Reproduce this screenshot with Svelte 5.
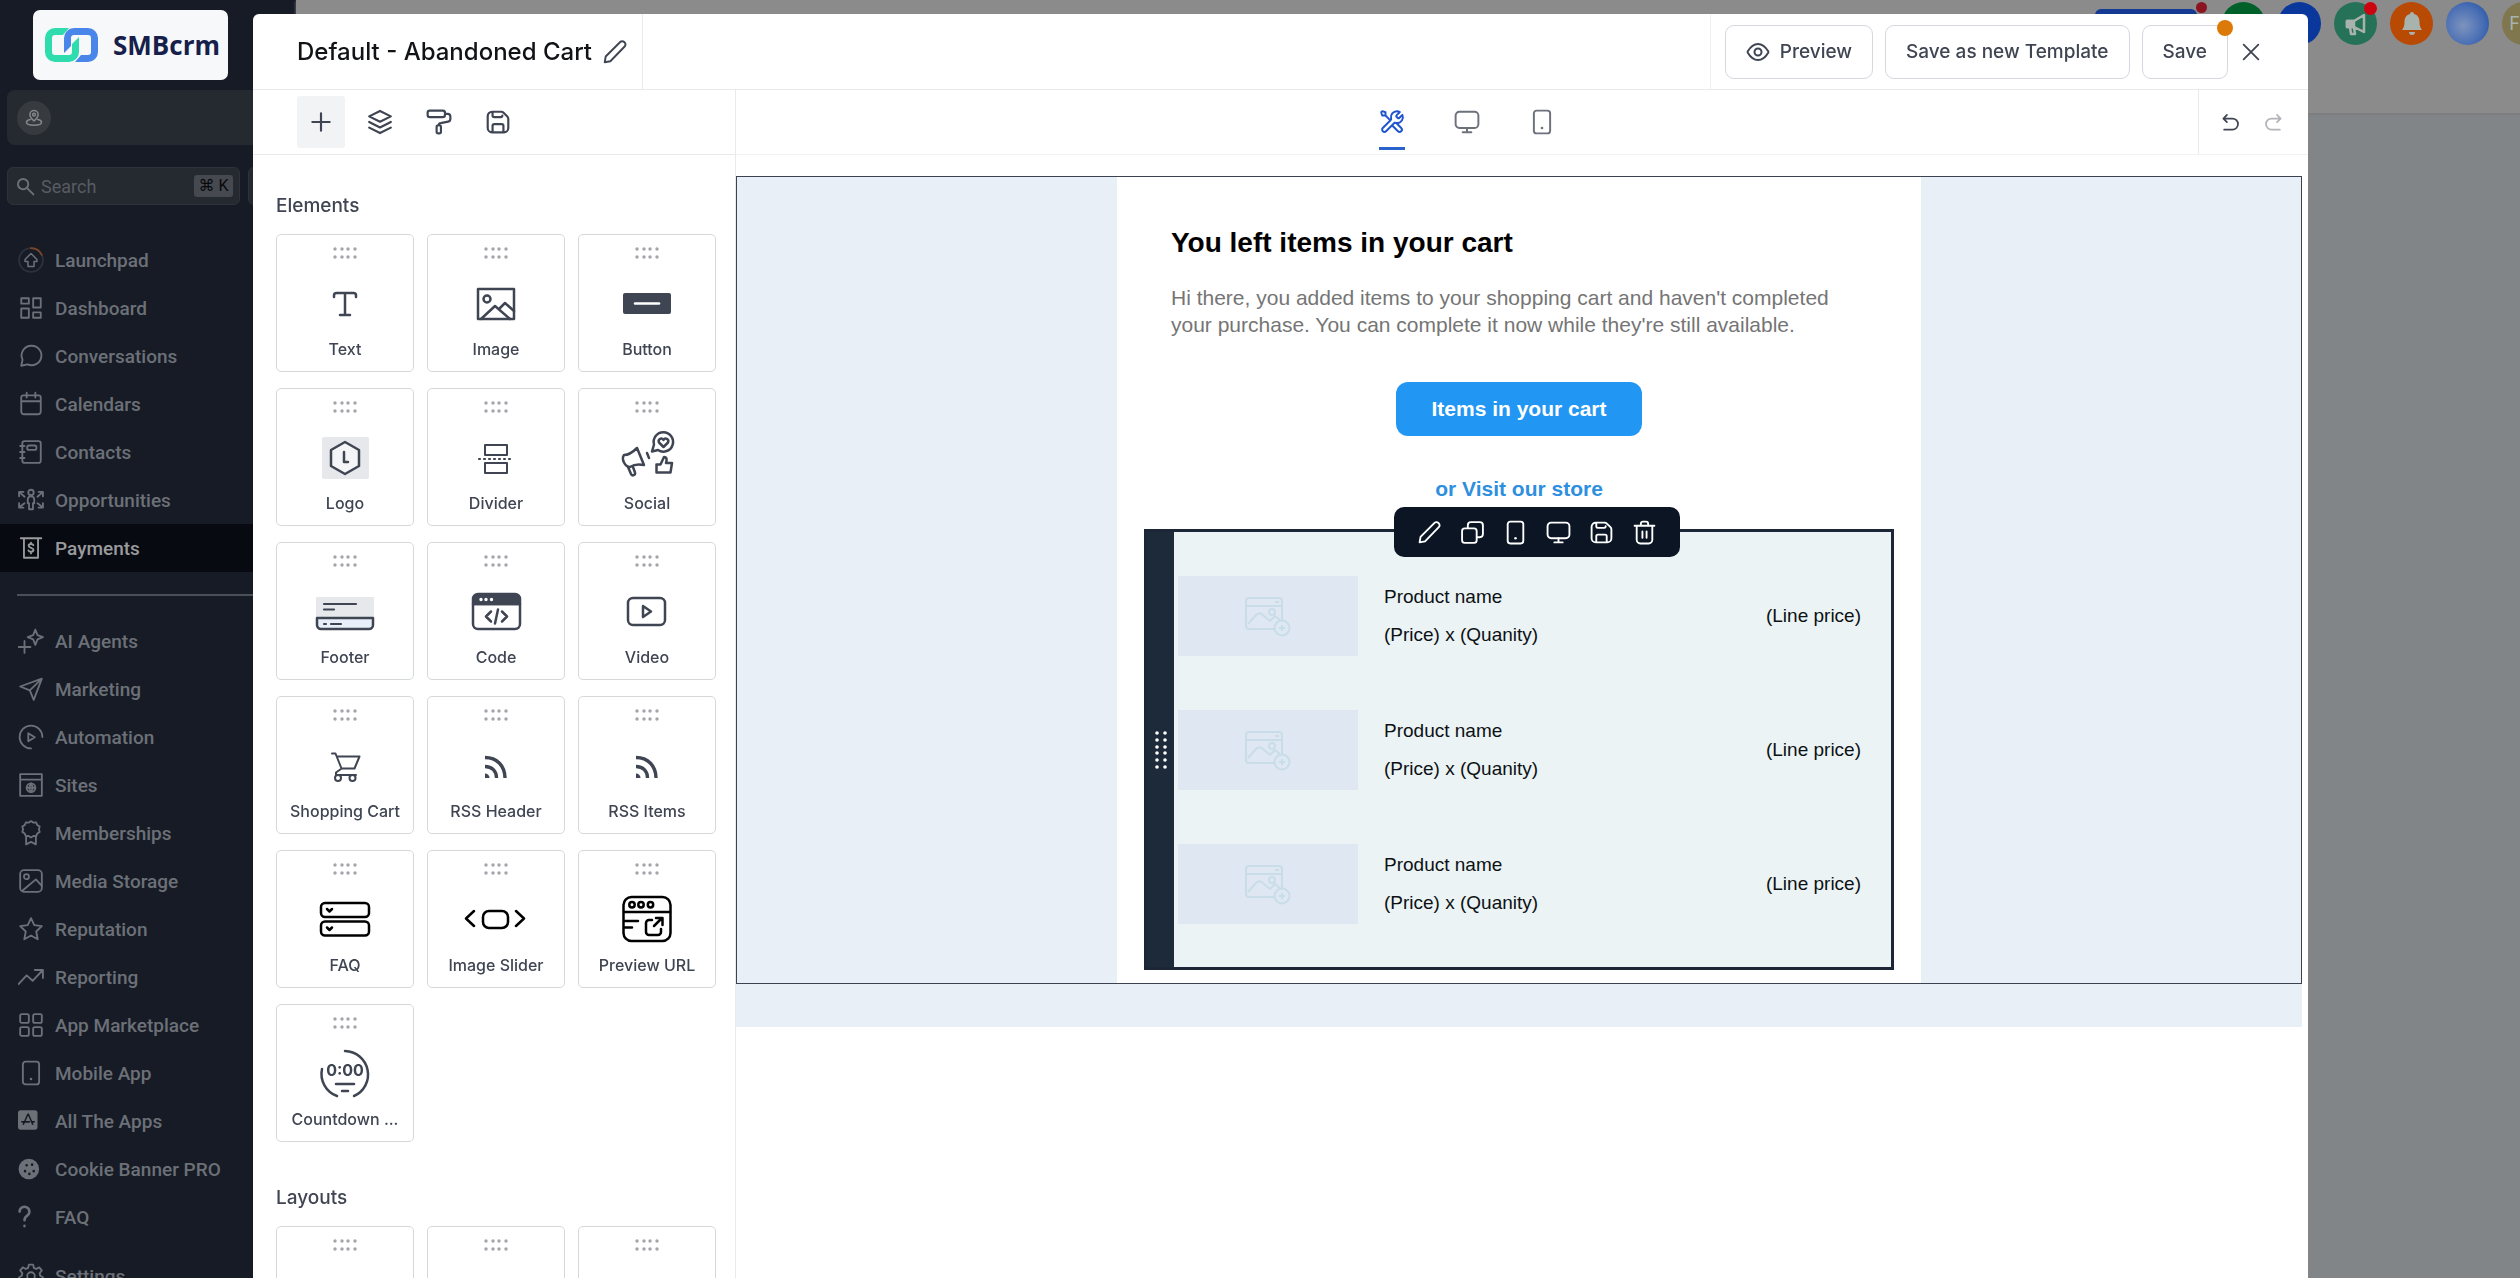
<script lang="ts">
  type NavItem = { label: string; icon: string; active?: boolean };

  const mainNav: NavItem[] = [
    { label: 'Launchpad', icon: 'launchpad' },
    { label: 'Dashboard', icon: 'dashboard' },
    { label: 'Conversations', icon: 'chat' },
    { label: 'Calendars', icon: 'calendar' },
    { label: 'Contacts', icon: 'contacts' },
    { label: 'Opportunities', icon: 'opportunities' },
    { label: 'Payments', icon: 'payments', active: true }
  ];

  const toolNav: NavItem[] = [
    { label: 'AI Agents', icon: 'sparkle' },
    { label: 'Marketing', icon: 'send' },
    { label: 'Automation', icon: 'automation' },
    { label: 'Sites', icon: 'sites' },
    { label: 'Memberships', icon: 'award' },
    { label: 'Media Storage', icon: 'media' },
    { label: 'Reputation', icon: 'star' },
    { label: 'Reporting', icon: 'trend' },
    { label: 'App Marketplace', icon: 'grid' },
    { label: 'Mobile App', icon: 'phone' },
    { label: 'All The Apps', icon: 'appstore' },
    { label: 'Cookie Banner PRO', icon: 'cookie' },
    { label: 'FAQ', icon: 'question' }
  ];

  const elements = [
    { label: 'Text', art: 'text' },
    { label: 'Image', art: 'image' },
    { label: 'Button', art: 'button' },
    { label: 'Logo', art: 'logo' },
    { label: 'Divider', art: 'divider' },
    { label: 'Social', art: 'social' },
    { label: 'Footer', art: 'footer' },
    { label: 'Code', art: 'code' },
    { label: 'Video', art: 'video' },
    { label: 'Shopping Cart', art: 'cart' },
    { label: 'RSS Header', art: 'rss' },
    { label: 'RSS Items', art: 'rss' },
    { label: 'FAQ', art: 'faq' },
    { label: 'Image Slider', art: 'slider' },
    { label: 'Preview URL', art: 'url' },
    { label: 'Countdown ...', art: 'countdown' }
  ];

  const panelTabs = [
    { label: 'Add', icon: 'plus' },
    { label: 'Layers', icon: 'layers' },
    { label: 'Styles', icon: 'roller' },
    { label: 'Saved', icon: 'save' }
  ];

  const viewTabs = [
    { label: 'Edit', icon: 'tools' },
    { label: 'Desktop', icon: 'monitor' },
    { label: 'Mobile', icon: 'phone' }
  ];

  const blockActions = [
    { label: 'Edit block', icon: 'pencil' },
    { label: 'Duplicate', icon: 'copy' },
    { label: 'Hide on mobile', icon: 'phone' },
    { label: 'Hide on desktop', icon: 'monitor' },
    { label: 'Save block', icon: 'save' },
    { label: 'Delete', icon: 'trash' }
  ];

  const products = [1, 2, 3];

  let panel = $state('Add');
  let view = $state('Edit');

  // 24x24 stroke icons
  const icons: Record<string, string> = {
    launchpad: '<circle cx="12" cy="12" r="11" stroke="#2c323c"/><path d="M12 1a11 11 0 0 1 9.9 6.2" stroke="#7d4527"/><path d="M12 6l5.5 5.5v1.8h-2.7V18H9.2v-4.7H6.5v-1.8z" stroke-width="1.4"/>',
    dashboard: '<path d="M3 3h7v5H3zM14 3h7v8.500h-7zM3 12.500h7V21H3zM14 16h7v5h-7z"/>',
    chat: '<path d="M12.500 2.500a9 9 0 1 1-3.600 17.200L3 21l1.200-5.600A9 9 0 0 1 12.500 2.500z"/>',
    calendar: '<path d="M5 4h14a2 2 0 0 1 2 2v13a2.500 2.500 0 0 1-2.500 2.500h-13A2.500 2.500 0 0 1 3 19V6a2 2 0 0 1 2-2zM3 9.500h18M8 1.500V6M16 1.500V6"/>',
    contacts: '<path d="M6 2h13a2 2 0 0 1 2 2v16a2 2 0 0 1-2 2H6a2 2 0 0 1-2-2V4a2 2 0 0 1 2-2zM2 6.500h4M2 12h4M2 17.500h4"/><rect x="8.500" y="6" width="8.500" height="4" rx="1.500"/>',
    opportunities: '<circle cx="12" cy="5" r="2.500"/><path d="M9 11.500a3 3 0 0 1 6 0V15h-1.200v5.500h-3.600V15H9zM1 8.500V4.500h4M1.500 5l4.500 4M23 8.500V4.500h-4M22.500 5L18 9M1 15v4h4M1.500 18.500L6 15M23 15v4h-4M22.500 18.500L18 15"/>',
    payments: '<path d="M2.500 3h19M5.500 3v18h13V3"/><path d="M14.200 9.400c-.4-.8-1.200-1.100-2.200-1.100-1.300 0-2.200.6-2.200 1.700 0 2.400 4.500 1.200 4.500 3.700 0 1.200-1 1.800-2.300 1.800-1.100 0-2-.4-2.400-1.300M12 7v1.200M12 15.600V17"/>',
    sparkle: '<path d="M16 1.500l2 5 5 2-5 2-2 5-2-5-5-2 5-2zM6 12v11M.500 17.500h11"/>',
    send: '<path d="M22 2.500L14.500 22l-3.600-8.800L2 9.700zM22 2.500L10.900 13.200"/>',
    automation: '<path d="M12 22.500A10.500 10.500 0 1 1 22.500 12"/><path d="M9.500 8.500l6 3.800-6 3.700z"/>',
    sites: '<path d="M2 2h20v20H2zM2 7h20"/><circle cx="12" cy="14.500" r="4"/><path d="M8 14.500h8M12 10.500c-1.800 2.500-1.800 5.500 0 8M12 10.500c1.800 2.500 1.800 5.500 0 8"/>',
    award: '<path d="M12 1l2.200 1.400 2.600-.1 1 2.400 2.200 1.400-.7 2.500.7 2.500-2.200 1.400-1 2.400-2.600-.1L12 16.200l-2.200-1.400-2.600.1-1-2.400L4 11.100l.7-2.500L4 6.100l2.200-1.400 1-2.400 2.600.1zM7.500 15v7.500l4.500-2.300 4.500 2.300V15"/>',
    media: '<rect x="2" y="2" width="20" height="20" rx="3.500"/><circle cx="7.800" cy="8" r="2.300"/><path d="M4 21L16.500 10.500l5.500 6"/>',
    star: '<path d="M12 2l3 6.500 7 .9-5.200 4.900L18.200 21.500 12 18l-6.200 3.500 1.400-7.200L2 9.400l7-.9z"/>',
    trend: '<path d="M.500 18.500L8 10.500l5.500 5L22.500 6M15.500 5.500h7.500V13"/>',
    grid: '<rect x="2" y="2" width="8" height="8" rx="1.500"/><rect x="14" y="2" width="8" height="8" rx="1.500"/><rect x="2" y="14" width="8" height="8" rx="1.500"/><rect x="14" y="14" width="8" height="8" rx="1.500"/>',
    phone: '<rect x="4.500" y="1.500" width="15" height="21" rx="2.500"/><path d="M12 17.500v.1" stroke-width="2.400"/>',
    appstore: '<rect x="0" y="2" width="18" height="18" rx="2.500" fill="currentColor" stroke="none"/><path d="M9.500 5.500L13.500 15M9 6L5 15M3.500 12.800h7M13 12.800h2" stroke="#161b26" stroke-width="1.400"/>',
    cookie: '<circle cx="10" cy="12" r="9.500" fill="currentColor" stroke="none"/><path d="M8 8.500v.1M6.500 14v.1M10.500 16.500v.1M14.500 14v.1M13 8v.1" stroke="#161b26" stroke-width="2.400"/>',
    question: '<path d="M1.500 7a4.500 4.500 0 1 1 7 3.800c-1.800 1.200-2.500 2-2.500 4.200M6 20.200v.2" stroke-width="2.400"/>',
    gear: '<circle cx="12" cy="12" r="3.500"/><path d="M10 1.500h4l.6 3 2.200 1 2.800-1.500 2.400 2.800L20 9.500l.5 2.200 2.500 1.500-1 3.800-3 .2-1.500 2 1 2.800-3.500 1.500-2-2.200h-2l-2 2.200L5.500 22l1-2.800L5 17.200 2 17l-1-3.800 2.500-1.500L4 9.500 2 6.800 4.400 4l2.800 1.500 2.200-1z"/>',
    pencil: '<path d="M2.500 21.500l.9-5.300L16.800 2.800a2.600 2.600 0 0 1 3.700 0l.4.400a2.600 2.600 0 0 1 0 3.700L7.700 20.500z"/>',
    plus: '<path d="M12 4v16M4 12h16"/>',
    layers: '<path d="M12 1.800l10 5-10 5-10-5zM2 12l10 5 10-5M2 17.200l10 5 10-5"/>',
    roller: '<rect x="1.500" y="1.500" width="16" height="6" rx="2"/><path d="M17.500 4.500h2.500a2.500 2.500 0 0 1 2.500 2.500v2.200a2.500 2.500 0 0 1-2 2.400L13.500 13a2 2 0 0 0-1.700 2"/><rect x="9.800" y="15" width="4" height="7.500" rx="1.500"/>',
    save: '<path d="M7 2.500V6a1.500 1.500 0 0 0 1.500 1.500h6A1.500 1.500 0 0 0 16 6M17 21.500v-6a1.500 1.500 0 0 0-1.500-1.500h-7A1.500 1.500 0 0 0 7 15.500v6M21.500 9v8.500a4 4 0 0 1-4 4h-11a4 4 0 0 1-4-4v-11a4 4 0 0 1 4-4H15a3 3 0 0 1 2.100.9l3.500 3.500A3 3 0 0 1 21.500 9z"/>',
    tools: '<path d="M6 6l4.500 4.500M6 6H3L2 3l1-1 3 1zM19.260 2.740l-2.630 2.630c-.4.400-.6.600-.67.820a1 1 0 0 0 0 .62c.07.230.27.430.67.820l.24.240c.4.400.6.600.82.670a1 1 0 0 0 .62 0c.23-.07.430-.27.820-.67l2.460-2.460A5.500 5.500 0 0 1 16.500 13c-.37 0-.72-.04-1.070-.1-.49-.1-.73-.15-.88-.13a1 1 0 0 0-.37.110c-.13.070-.26.200-.52.460L6.500 20.500a2.120 2.120 0 0 1-3-3l7.160-7.160c.26-.26.390-.39.460-.52a1 1 0 0 0 .11-.37c.02-.15-.03-.39-.13-.88A5.500 5.500 0 0 1 16.500 2c1 0 1.950.270 2.760.740zM12 15l5.500 5.500a2.120 2.120 0 0 0 3-3l-4.530-4.520a5.500 5.500 0 0 1-.93-.17c-.39-.11-.82-.03-1.100.250z"/>',
    monitor: '<rect x="1.500" y="2.500" width="21" height="15" rx="3.500"/><path d="M12 17.500v4M8 21.500h8"/>',
    copy: '<path d="M7.500 7.500V5a3 3 0 0 1 3-3H19a3 3 0 0 1 3 3v8.500a3 3 0 0 1-3 3h-2.500"/><rect x="2" y="8" width="14" height="14" rx="2.500"/>',
    trash: '<path d="M8.500 5V3.500a2 2 0 0 1 2-2h3a2 2 0 0 1 2 2V5M2.500 5.500h19M4.500 5.500v13.500a3.500 3.500 0 0 0 3.500 3.500h8a3.500 3.500 0 0 0 3.500-3.500V5.500M10 11v6M14 11v6"/>',
    eye: '<path d="M1.800 12.700a1.500 1.500 0 0 1 0-1.400C3 9.300 6.600 4 12 4s9 5.300 10.200 7.300a1.500 1.500 0 0 1 0 1.400C21 14.700 17.400 20 12 20s-9-5.300-10.200-7.300z"/><circle cx="12" cy="12" r="3.500"/>',
    close: '<path d="M4 4l16 16M20 4L4 20"/>',
    undo: '<path d="M7.500 2.500l-4.500 4.500 4.500 4.500M3.500 7H14.500a6.500 6.500 0 0 1 0 14H4"/>',
    redo: '<path d="M16.500 2.500l4.500 4.500-4.500 4.500M20.500 7H9.500a6.500 6.500 0 0 0 0 14H20"/>',
    search: '<circle cx="9" cy="9" r="6.500"/><path d="M14 14l8 8"/>',
    pin: '<path d="M12 16c-3.500-3.400-5.500-6-5.500-8.500a5.500 5.500 0 0 1 11 0C17.500 10 15.500 12.600 12 16zM7 14c-3 .5-5 1.800-5 3.500C2 20 6.500 21.500 12 21.500s10-1.500 10-4c0-1.700-2-3-5-3.500"/><circle cx="12" cy="7.500" r="1.800"/>'
  };

  // 64x56 drawings on the element cards
  const arts: Record<string, string> = {
    text: '<path d="M21 22v-1.500a2.500 2.500 0 0 1 2.500-2.500h17a2.500 2.500 0 0 1 2.500 2.500V22M32 18v22M27 40h10"/>',
    image: '<path d="M14 14h36v30H14z"/><circle cx="23" cy="24" r="3.500"/><path d="M17 44l14-13 15 13M35 34l6-6 9 8"/>',
    button: '<rect x="8" y="18" width="48" height="21" rx="2" fill="currentColor" stroke="none"/><path d="M20 28.500h24" stroke="#fff"/>',
    logo: '<rect x="9" y="8" width="47" height="42" rx="2" fill="#e7e8eb" stroke="none"/><path d="M32 13l14 8v16l-14 8-14-8V21z" fill="#f4f5f6"/><path d="M31 23v10h4"/>',
    divider: '<path d="M21 16h22v10H21zM21 34h22v10H21z" stroke-width="2"/><path d="M15 30h34" stroke-dasharray="1 4" stroke-width="2.200"/>',
    social: '<path d="M9 26c5 0 9-3 13-7l7 17c-7-1.500-11 0-14 2-5 0-9-8-6-12zM13 38l3 7c1 2.500 5 1 4-1.500L18 38M32 24l2 5"/><path d="M39 15.500a9.700 9.700 0 1 1 4 5.500l-6 1.500z"/><path d="M48.500 18l-4.500-4.500c-1.500-3.500 3-5.500 4.500-2.500 1.500-3 6-1 4.500 2.500z"/><path d="M41.500 35.500h4l3.500-7.500c3 0 3 3 2 6h6l-1.500 9.500h-14z"/>',
    footer: '<path d="M3 14h58v21H3z" fill="#e7e8eb" stroke="none"/><path d="M4 35h56v7a4 4 0 0 1-4 4H8a4 4 0 0 1-4-4z" fill="#e8effa"/><path d="M11 21h32M11 26.500h10M11 41h2M18 41h10" stroke-width="2.200"/>',
    code: '<path d="M9 21v-5a5 5 0 0 1 5-5h37a5 5 0 0 1 5 5v5z" fill="currentColor"/><path d="M9 21h47v20a5 5 0 0 1-5 5H14a5 5 0 0 1-5-5z"/><path d="M17 16.500v.1M22 16.500v.1M27.500 16.500v.1" stroke="#fff" stroke-width="3.400"/><path d="M27 28.500l-5 5 5 5M38 28.500l5 5-5 5M34 26.500l-3 14"/>',
    video: '<rect x="13" y="15" width="37" height="27" rx="5"/><path d="M28 23l8 5.500-8 5.500z"/>',
    cart: '<path d="M19 16.500h3.500l6 15h13l5-12H24M28 32l-5 3.500v2.500h20" stroke-width="2"/><circle cx="25" cy="41" r="3" stroke-width="2"/><circle cx="39.500" cy="41" r="3" stroke-width="2"/>',
    rss: '<path d="M21 20.500c12 0 20 8.500 20 20.500M21 29.500c7 0 11.500 4.500 11.500 11.500" stroke-width="3.400" stroke-linecap="butt"/><path d="M21 36.500a4.500 4.500 0 0 1 4.500 4.500H21z" fill="currentColor" stroke="none"/>',
    faq: '<g stroke="#000"><rect x="8" y="12" width="48" height="14" rx="4"/><rect x="8" y="30.500" width="48" height="14" rx="4"/><path d="M14 18l2.500 2.500L19 18M14 36.500l2.500 2.500L19 36.500"/></g>',
    slider: '<g stroke="#000"><rect x="19" y="20" width="25" height="17" rx="6"/><path d="M10 20l-8 7.500 8 7.500M52 20l8 7.500-8 7.500"/></g>',
    url: '<g stroke="#000"><rect x="8.500" y="6" width="47" height="44" rx="8"/><path d="M9 21h46M10 30h13M10 36.500h7"/><circle cx="17" cy="13.800" r="2.700"/><circle cx="26" cy="13.800" r="2.700"/><circle cx="35.500" cy="13.800" r="2.700"/><path d="M37 29h-3a3 3 0 0 0-3 3v9a3 3 0 0 0 3 3h9a3 3 0 0 0 3-3v-3M39 35l8-8M41 27h6.500v7"/></g>',
    countdown: '<path d="M32 6a23.500 23.500 0 0 1 9 45M24 51A23.500 23.500 0 0 1 9 24M23 39h18M29 46h6"/><text x="32" y="31" text-anchor="middle" font-family="Inter, sans-serif" font-size="16" font-weight="700" fill="currentColor" stroke="none">0:00</text>'
  };
</script>

{#snippet icon(name: string, size: number, weight = 2)}
  <svg
    width={size}
    height={size}
    viewBox="0 0 24 24"
    fill="none"
    stroke="currentColor"
    stroke-width={weight}
    stroke-linecap="round"
    stroke-linejoin="round"
    aria-hidden="true"
  >
    {@html icons[name]}
  </svg>
{/snippet}

{#snippet grip()}
  <svg class="grip" width="24" height="12" viewBox="0 0 24 12" aria-hidden="true">
    {#each [2, 9, 15, 22] as x}
      <circle cx={x} cy="2" r="1.700" />
      <circle cx={x} cy="10" r="1.700" />
    {/each}
  </svg>
{/snippet}

{#snippet navLink(item: NavItem)}
  <a href="#nav" class="nav-item" class:active={item.active}>
    {@render icon(item.icon, 26, 1.7)}
    <span>{item.label}</span>
  </a>
{/snippet}

<div class="app">
  <aside class="sidebar">
    <a href="#home" class="brand">
      <svg width="54" height="36" viewBox="0 0 54 36" aria-hidden="true">
        <path d="M30 35H43a10 10 0 0 0 10-10V11A10 10 0 0 0 43 1H29a10 10 0 0 0-10 10V26l7-7v-8a3 3 0 0 1 3-3h14a3 3 0 0 1 3 3v14a3 3 0 0 1-3 3h-7z" fill="#4a86ea" />
        <path d="M24 1H10A10 10 0 0 0 0 11v14a10 10 0 0 0 10 10h14a10 10 0 0 0 10-10V10l-7 7v8a3 3 0 0 1-3 3H10a3 3 0 0 1-3-3V11a3 3 0 0 1 3-3h8z" fill="#2fdcae" />
      </svg>
      <span>SMBcrm</span>
    </a>
    <button class="location" aria-label="Switch location">
      <span class="location-pin">{@render icon('pin', 18)}</span>
    </button>
    <div class="search-row">
      <label class="search">
        {@render icon('search', 19, 2.4)}
        <input type="text" placeholder="Search" aria-label="Search" />
        <kbd>⌘ K</kbd>
      </label>
      <button class="quick" aria-label="Quick actions"></button>
    </div>
    <nav>
      {#each mainNav as item}
        {@render navLink(item)}
      {/each}
      <hr />
      {#each toolNav as item}
        {@render navLink(item)}
      {/each}
      <div class="settings">
        {@render navLink({ label: 'Settings', icon: 'gear' })}
      </div>
    </nav>
  </aside>

  <div class="page">
    <header class="page-top">
      <div class="page-pill-wrap"><span class="page-pill"></span><i class="dot-small"></i></div>
      <button class="round green" aria-label="Phone"></button>
      <button class="round blue" aria-label="Assistant"></button>
      <button class="round teal" aria-label="Announcements">
        <svg width="24" height="24" viewBox="0 0 24 24" fill="none" stroke="currentColor" stroke-width="2.500" stroke-linejoin="round" aria-hidden="true">
          <path d="M3 9h7l10-6v17l-10-5H3zM6 15l1 7h4l-1-6" />
          <path d="M3 9h7v6H3z" fill="currentColor" />
        </svg>
        <i class="dot"></i>
      </button>
      <button class="round orange" aria-label="Notifications">
        <svg width="22" height="24" viewBox="0 0 22 24" fill="currentColor" aria-hidden="true">
          <path d="M11 0a2 2 0 0 1 2 2c4 1 5.500 4 5.500 8 0 4 1 6 2.500 8H1c1.500-2 2.500-4 2.500-8 0-4 1.500-7 5.500-8a2 2 0 0 1 2-2zM8 20h6a3 3 0 0 1-6 0z" />
        </svg>
      </button>
      <button class="round sphere" aria-label="Assistant orb"></button>
      <button class="round olive">F</button>
    </header>
  </div>
</div>

<div class="modal" role="dialog" aria-label="Email builder">
  <header class="modal-head">
    <div class="title">
      <h1>Default - Abandoned Cart</h1>
      <button class="plain" aria-label="Rename">{@render icon('pencil', 26, 1.8)}</button>
    </div>
    <div class="head-actions">
      <button class="btn">{@render icon('eye', 24)}Preview</button>
      <button class="btn">Save as new Template</button>
      <button class="btn save">Save<i class="unsaved"></i></button>
      <button class="plain" aria-label="Close">{@render icon('close', 22, 2)}</button>
    </div>
  </header>

  <div class="modal-body">
    <section class="panel">
      <div class="panel-tabs">
        {#each panelTabs as tab}
          <button
            class="panel-tab"
            class:selected={panel === tab.label}
            aria-label={tab.label}
            onclick={() => (panel = tab.label)}
          >
            {@render icon(tab.icon, 26, 2)}
          </button>
        {/each}
      </div>
      <div class="panel-scroll">
        <h2>Elements</h2>
        <div class="cards">
          {#each elements as el}
            <button class="card">
              {@render grip()}
              <svg
                class="art"
                width="64"
                height="56"
                viewBox="0 0 64 56"
                fill="none"
                stroke="currentColor"
                stroke-width="2.500"
                stroke-linecap="round"
                stroke-linejoin="round"
                aria-hidden="true"
              >
                {@html arts[el.art]}
              </svg>
              <span>{el.label}</span>
            </button>
          {/each}
        </div>
        <h2 class="layouts">Layouts</h2>
        <div class="cards">
          {#each [1, 2, 3] as columns}
            <button class="card" aria-label="{columns} column layout">{@render grip()}</button>
          {/each}
        </div>
      </div>
    </section>

    <section class="editor">
      <div class="editor-bar">
        <div class="view-tabs">
          {#each viewTabs as tab}
            <button
              class="view-tab"
              class:selected={view === tab.label}
              aria-label={tab.label}
              onclick={() => (view = tab.label)}
            >
              {@render icon(tab.icon, 26, 1.8)}
            </button>
          {/each}
        </div>
        <div class="history">
          <button class="plain" aria-label="Undo">{@render icon('undo', 19, 2.2)}</button>
          <button class="plain" aria-label="Redo" disabled>{@render icon('redo', 19, 2.2)}</button>
        </div>
      </div>

      <div class="canvas">
        <div class="canvas-section">
          <article class="email">
            <h3>You left items in your cart</h3>
            <p>
              Hi there, you added items to your shopping cart and haven't completed your purchase. You
              can complete it now while they're still available.
            </p>
            <a href="#cart" class="cta">Items in your cart</a>
            <a href="#store" class="store">or Visit our store</a>

            <div class="block">
              <div class="block-handle">
                <svg width="12" height="38" viewBox="0 0 12 38" fill="#fff" aria-hidden="true">
                  {#each [2, 9, 16, 22, 29, 36] as y}
                    <circle cx="2" cy={y} r="1.800" />
                    <circle cx="10" cy={y} r="1.800" />
                  {/each}
                </svg>
              </div>
              <ul>
                {#each products as product (product)}
                  <li>
                    <div class="thumb">
                      <svg width="46" height="42" viewBox="0 0 46 42" fill="none" stroke="#c9dde9" stroke-width="2" aria-hidden="true">
                        <rect x="1" y="3" width="36" height="31" rx="3" />
                        <path d="M1 11h36M30 7h4M3 29l8-9c3-3 5-2 8 1l6 5 5-5 5 4" />
                        <circle cx="27" cy="17" r="3" />
                        <circle cx="37" cy="33" r="7.500" fill="#dde8f2" />
                        <path d="M37 30v6M34 33h6" />
                      </svg>
                    </div>
                    <div class="info">
                      <span>Product name</span>
                      <span>(Price) x (Quanity)</span>
                    </div>
                    <span class="line-price">(Line price)</span>
                  </li>
                {/each}
              </ul>
              <div class="block-tools">
                {#each blockActions as action}
                  <button class="plain" aria-label={action.label}>{@render icon(action.icon, 25, 1.8)}</button>
                {/each}
              </div>
            </div>
          </article>
        </div>
      </div>
    </section>
  </div>
</div>

<style>
  :global(body) {
    margin: 0;
    overflow: hidden;
    font-family: Inter, sans-serif;
    color: #3f4552;
  }

  :global(svg) {
    display: block;
    flex: none;
  }

  button {
    font: inherit;
    color: inherit;
    padding: 0;
    border: none;
    background: none;
    cursor: pointer;
  }

  h1,
  h2,
  h3,
  p,
  ul {
    margin: 0;
    padding: 0;
  }

  a {
    text-decoration: none;
    color: inherit;
  }

  .app {
    display: flex;
    height: 100vh;
    overflow: hidden;
  }

  /* sidebar */
  .sidebar {
    width: 296px;
    flex: none;
    box-sizing: border-box;
    padding-top: 10px;
    overflow: hidden;
    background: #161b26;
    color: #6c7077;
    font-family: Roboto, sans-serif;
  }

  .brand {
    display: flex;
    align-items: center;
    gap: 14px;
    width: 183px;
    height: 70px;
    margin-left: 33px;
    padding-left: 12px;
    border-radius: 7px;
    background: #f7f8f9;
    color: #16204a;
    font-family: 'Open Sans', sans-serif;
    font-size: 26px;
    font-weight: 700;
  }

  .location {
    display: flex;
    align-items: center;
    width: calc(100% - 14px);
    height: 55px;
    margin: 10px 7px 0;
    padding-left: 10px;
    border-radius: 8px;
    background: #252a31;
  }

  .location-pin {
    display: grid;
    place-items: center;
    width: 34px;
    height: 34px;
    border-radius: 50%;
    background: #373a3f;
    color: #85888c;
  }

  .search-row {
    display: flex;
    gap: 8px;
    margin: 22px 7px 0;
  }

  .search {
    display: flex;
    align-items: center;
    gap: 6px;
    box-sizing: border-box;
    width: 233px;
    height: 38px;
    padding: 0 6px 0 8px;
    border: 1px solid #2e333a;
    border-radius: 6px;
    background: #252a31;
  }

  .search input {
    flex: 1;
    min-width: 0;
    padding: 0;
    border: none;
    outline: none;
    background: none;
    color: inherit;
    font-family: inherit;
    font-size: 18px;
  }

  .search input::placeholder {
    color: #585c62;
  }

  kbd {
    width: 39px;
    border-radius: 3px;
    background: #46494f;
    color: #07090d;
    font-family: Roboto, 'DejaVu Sans', sans-serif;
    font-size: 16px;
    line-height: 22px;
    text-align: center;
  }

  .quick {
    flex: 1;
    border: 1px solid #2e333a;
    border-radius: 6px;
    background: #252a31;
  }

  nav {
    margin-top: 31px;
  }

  .nav-item {
    display: flex;
    align-items: center;
    gap: 11px;
    height: 48px;
    padding-left: 18px;
    font-size: 19px;
    font-weight: 500;
    white-space: nowrap;
  }

  .nav-item.active {
    background: #080a12;
    color: #9a9b9d;
  }

  nav hr {
    height: 2px;
    margin: 22px 17px 21px;
    border: none;
    background: #4b4f57;
  }

  .settings {
    margin-top: 11px;
  }

  /* dimmed page */
  .page {
    flex: 1;
    min-width: 0;
    background: #828587;
  }

  .page-top {
    display: flex;
    justify-content: flex-end;
    gap: 13px;
    height: 113px;
    padding-top: 2px;
    box-sizing: border-box;
    margin-right: -25px;
    background: #8b8b8b;
    box-shadow: 0 1px 3px #77797b;
  }

  .page-pill-wrap {
    display: flex;
    margin-right: 2px;
  }

  .page-pill {
    width: 102px;
    height: 36px;
    margin-top: 7px;
    border-radius: 6px;
    background: #143a94;
  }

  .dot-small {
    width: 11px;
    height: 11px;
    margin-left: -1px;
    border-radius: 50%;
    background: #8c1420;
  }

  .round {
    position: relative;
    display: grid;
    place-items: center;
    width: 43px;
    height: 43px;
    flex: none;
    border-radius: 50%;
    color: #a9b3ae;
  }

  .green {
    background: #00602a;
  }

  .blue {
    background: #0a379c;
  }

  .teal {
    background: #257258;
  }

  .orange {
    background: #b84a03;
  }

  .sphere {
    background: radial-gradient(circle at 40% 55%, #7d93bd, #4a6fb5 55%, #174aa0);
  }

  .olive {
    padding-right: 18px;
    background: #80774f;
    font-size: 18px;
  }

  .dot {
    position: absolute;
    top: 0;
    right: 0;
    width: 13px;
    height: 13px;
    border-radius: 50%;
    background: #cc0410;
  }

  /* builder */
  .modal {
    position: fixed;
    inset: 14px 212px 0 253px;
    display: flex;
    flex-direction: column;
    overflow: hidden;
    border-radius: 6px 6px 0 0;
    background: #fff;
  }

  .modal-head {
    display: flex;
    justify-content: space-between;
    flex: none;
    height: 75px;
    border-bottom: 1px solid #e9eaec;
  }

  .title {
    display: flex;
    align-items: center;
    gap: 10px;
    padding: 0 14px 0 44px;
    border-right: 1px solid #e9eaec;
  }

  h1 {
    color: #111317;
    font-size: 24px;
    font-weight: 500;
    line-height: 32px;
  }

  .plain {
    display: grid;
    place-items: center;
  }

  .head-actions {
    display: flex;
    align-items: center;
    gap: 12px;
    padding: 0 46px 0 14px;
    border-left: 1px solid #eff0f2;
  }

  .btn {
    position: relative;
    display: flex;
    align-items: center;
    gap: 10px;
    box-sizing: border-box;
    height: 54px;
    padding: 0 20px;
    border: 1px solid #d5d8dc;
    border-radius: 9px;
    font-size: 19px;
    font-weight: 500;
    white-space: nowrap;
  }

  .unsaved {
    position: absolute;
    top: -6px;
    right: -6px;
    width: 16px;
    height: 16px;
    border-radius: 50%;
    background: #dc7a09;
  }

  .modal-body {
    display: flex;
    flex: 1;
    min-height: 0;
  }

  .panel {
    display: flex;
    flex-direction: column;
    box-sizing: border-box;
    width: 483px;
    flex: none;
    border-right: 1px solid #e9eaec;
  }

  .panel-tabs {
    display: flex;
    align-items: center;
    gap: 11px;
    flex: none;
    height: 64px;
    padding-left: 44px;
    border-bottom: 1px solid #e9eaec;
  }

  .panel-tab {
    display: grid;
    place-items: center;
    width: 48px;
    height: 52px;
    border-radius: 3px;
  }

  .panel-tab.selected {
    background: #f1f3f5;
  }

  .panel-scroll {
    flex: 1;
    overflow: hidden;
    padding: 38px 19px 0 23px;
  }

  h2 {
    font-size: 19px;
    font-weight: 500;
    line-height: 26px;
  }

  .layouts {
    margin-top: 43px;
  }

  .cards {
    display: grid;
    grid-template-columns: repeat(3, 1fr);
    gap: 16px 13px;
    margin-top: 15px;
  }

  .card {
    display: flex;
    flex-direction: column;
    align-items: center;
    box-sizing: border-box;
    height: 138px;
    padding-top: 12px;
    border: 1px solid #d6d9dc;
    border-radius: 5px;
    font-size: 16px;
    font-weight: 500;
    line-height: 20px;
    white-space: nowrap;
  }

  .grip {
    fill: #a2a5aa;
  }

  .art {
    margin: 16px 0 8px;
  }

  .editor {
    display: flex;
    flex-direction: column;
    flex: 1;
    min-width: 0;
  }

  .editor-bar {
    display: flex;
    flex: none;
    height: 64px;
    border-bottom: 1px solid #f1f2f4;
  }

  .view-tabs {
    display: flex;
    justify-content: center;
    flex: 1;
    gap: 49px;
  }

  .view-tab {
    display: grid;
    place-items: center;
    height: 60px;
    box-sizing: border-box;
    padding-top: 6px;
    border-bottom: 3px solid transparent;
    color: #6d717c;
  }

  .view-tab.selected {
    border-bottom-color: #2b62cc;
    color: #1f55cf;
  }

  .history {
    display: flex;
    align-items: center;
    gap: 24px;
    padding: 0 25px 0 22px;
    border-left: 1px solid #e9eaec;
  }

  .history .plain:disabled {
    color: #b2b4b9;
  }

  .canvas {
    margin: 21px 6px 0 0;
    padding-bottom: 43px;
    background: #e9eff7;
  }

  .canvas-section {
    border: 1px solid #3c4350;
  }

  .email {
    display: flex;
    flex-direction: column;
    align-items: center;
    box-sizing: border-box;
    max-width: 804px;
    margin: 0 auto;
    padding: 50px 27px 13px;
    background: #fff;
    font-family: 'Liberation Sans', Arial, sans-serif;
  }

  h3,
  p {
    box-sizing: border-box;
    width: 100%;
    padding: 0 27px;
  }

  h3 {
    color: #000;
    font-size: 28px;
    line-height: 32px;
  }

  p {
    margin-top: 25px;
    color: #757575;
    font-size: 21px;
    line-height: 27px;
  }

  .cta {
    margin-top: 44px;
    padding: 0 35px;
    border-radius: 12px;
    background: #2196f3;
    color: #fff;
    font-size: 21px;
    font-weight: 700;
    line-height: 54px;
  }

  .store {
    margin-top: 41px;
    color: #2f8fdf;
    font-size: 21px;
    font-weight: 700;
    line-height: 24px;
  }

  .block {
    position: relative;
    display: flex;
    align-self: stretch;
    margin-top: 28px;
    border: 3px solid #1d2636;
    background: #ebf3f5;
  }

  .block-tools {
    position: absolute;
    top: -25px;
    right: 211px;
    display: flex;
    align-items: center;
    gap: 18px;
    height: 50px;
    padding: 0 23px;
    border-radius: 10px;
    background: #0c1523;
    color: #fff;
  }

  .block-handle {
    display: grid;
    place-items: center;
    width: 27px;
    background: #1d2a39;
  }

  ul {
    flex: 1;
    padding: 17px 0 16px;
    list-style: none;
  }

  li {
    display: flex;
    align-items: center;
    height: 134px;
    padding: 0 30px 0 4px;
    color: #0d1114;
    font-size: 19px;
  }

  .thumb {
    display: grid;
    place-items: center;
    width: 180px;
    height: 80px;
    background: #dfe8f2;
  }

  .info {
    display: flex;
    flex-direction: column;
    flex: 1;
    gap: 14px;
    margin-left: 26px;
    line-height: 24px;
  }
</style>
